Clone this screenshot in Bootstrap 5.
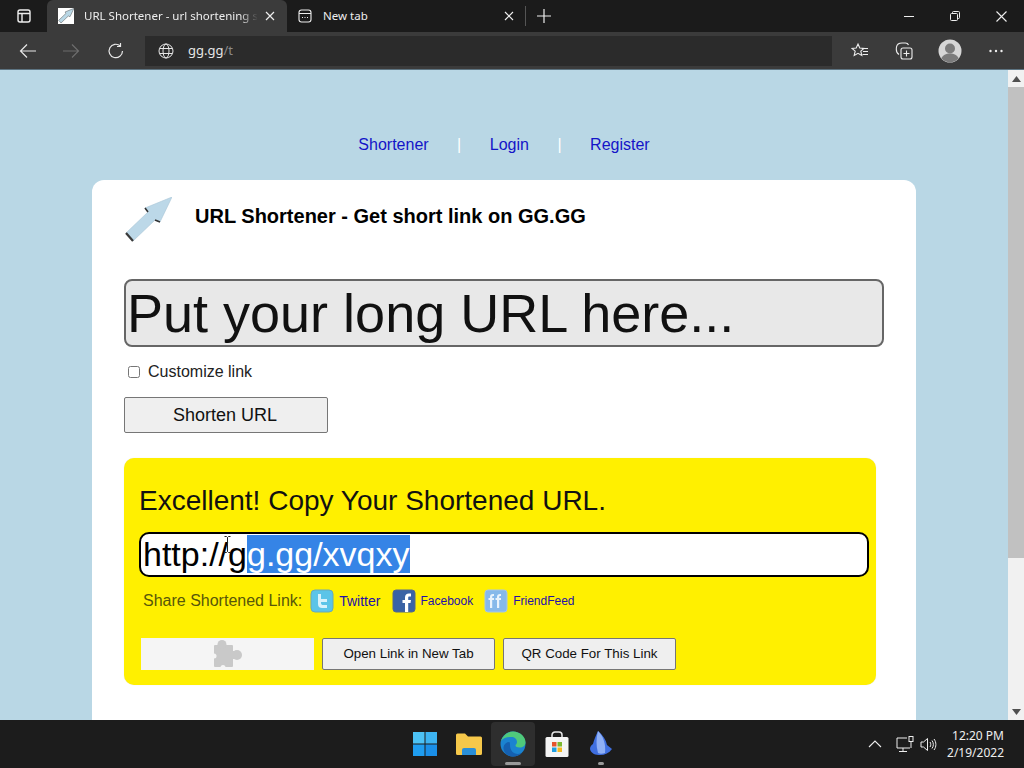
<!DOCTYPE html>
<html lang="en">
<head>
<meta charset="utf-8">
<title>URL Shortener</title>
<link href="https://cdn.jsdelivr.net/npm/bootstrap@5.3.0/dist/css/bootstrap.min.css" rel="stylesheet">
<style>
html,body{height:100%;overflow:hidden}
body{font-family:"Liberation Sans",Arial,sans-serif;background:#1c1c1c}
.shell{height:768px;width:1024px}
.ui{font-family:"Noto Sans","Open Sans",sans-serif}
.tabbar{height:32px;background:#1b1b1b;color:#eee;font-size:11.5px}
.winbtn{width:46px;height:32px}
.sidebtn{width:47px;height:32px}
.tab-on{width:240px;height:32px;background:#3b3b3b;padding:0 12px 0 11px;border-radius:6px 6px 0 0}
.tab-off{width:238px;height:32px;padding:0 11px 0 11px}
.favi{width:16px;height:16px;background:#fff;flex:none;margin-right:10px}
.tabtitle{flex:1;white-space:nowrap;overflow:hidden;-webkit-mask-image:linear-gradient(90deg,#000 86%,transparent 96%);mask-image:linear-gradient(90deg,#000 86%,transparent 96%)}
.newtab-label{flex:1;margin-left:11px}
.tabdiv{width:1px;height:20px;background:#555}
.plus{margin-left:8px}
.toolbar{height:38px;background:#3b3b3b;border-bottom:1px solid #5d7482}
.tool{width:44px;height:30px}
.tool-back{width:46px;margin-left:5px}
.tool-fwd{width:40px}
.tool-reload{width:50px}
.tool-avatar{width:48px}
.omni{width:687px;height:30px;background:#2b2b2b;color:#e6e6e6;font-size:13px;padding-left:13px;margin:0 6px 0 4px;gap:14px}
.omni .dim{color:#8a8a8a}
.viewport{height:650px}
.pagearea{width:1008px;height:650px;background:#b9d7e5;padding-top:61px}
.topnav{height:28px;margin-bottom:21px;font-size:16px;color:#fff}
.topnav a{color:#1414c8;text-decoration:none}
.topnav .sep{margin:0 28.5px}
.sheet{width:824px;margin:0 auto;height:600px;background:#fff;border-radius:12px;padding:17px 32px 0}
.logo-row{height:82px}
.sheet-title{font-size:20px;line-height:24px;font-weight:700;color:#000;margin:7px 0 0 23px}
.longurl.form-control{height:68px;border:2px solid #666;border-radius:8px;background:#e8e8e8;font-size:54px;padding:0 1px;color:#111;line-height:1}
.longurl.form-control::placeholder{color:#111;opacity:1}
.custom-row{height:50px;padding-left:4px;font-size:16px;color:#222}
.custom-row input{width:12px;height:12px;margin:0 8px 0 0}
.go.btn{width:204px;height:36px;background:#efefef;border:1px solid #767676;border-radius:2px;font-size:18px;color:#111;padding:0 2px 0 0;display:block}
.resultbox{width:752px;height:227px;margin-top:25px;background:#fff000;border-radius:10px;padding:0 7px 0 15px;box-shadow:0 0 1px #ddd}
.res-head{font-size:28px;color:#111;line-height:30px;padding-top:28px;margin:0}
.shorturl{height:45px;width:730px;margin-top:16px;background:#fff;border:2px solid #000;border-radius:10px;font-size:34px;line-height:41px;padding-left:2px;color:#000;position:relative}
.shorturl .sel{background:#3584e6;color:#fff}
.ibeam{position:absolute;left:83px;top:2px}
.share{height:32px;margin-top:8px;padding-left:4px;font-size:16px;color:#57570a}
.share a{color:#2410a8;text-decoration:none;font-size:12px}
.share a.big{font-size:14px}
.share svg{display:block;flex:none}
.gap-l8{margin-left:8px}
.gap-l12{margin-left:12px}
.gap-l11{margin-left:11px}
.gap-l5{margin-left:5px}
.gap-l4{margin-left:4px}
.actions{margin:21px 0 0 2px;gap:8px}
.puzzle{width:173px;height:32px;background:#f5f5f5}
.act.btn{width:173px;height:32px;background:#efefef;border:1px solid #767676;border-radius:2px;font-size:13.33px;color:#111;padding:0}
.scroll{width:16px;height:650px;background:#f1f1f1}
.sarrow{height:17px}
.thumb{height:471px;background:#c1c1c1}
.taskbar{height:48px;background:#1c1c1c;color:#eee;font-size:12px;line-height:17px}
.task-left{width:403px;flex:none}
.taskitem{width:44px;height:44px}
.taskitem.on{background:#2e2e2e;border-radius:4px;position:relative}
.taskitem.on::after,.taskitem.run::after{content:"";position:absolute;bottom:1px;left:50%;transform:translateX(-50%);height:3px;border-radius:2px;background:#9a9a9a;width:16px}
.taskitem.run{position:relative}
.taskitem.run::after{width:6px}
.tray-monitor{margin-left:14px}
.tray-speaker{margin-left:6px}
.clock{padding-right:20px;text-align:right;margin-left:10px}
</style>
</head>
<body>
<div class="shell d-flex flex-column">
  <div class="tabbar ui d-flex align-items-center">
    <div class="sidebtn d-flex align-items-center justify-content-center">
      <svg width="16" height="16" viewBox="0 0 16 16" fill="none" stroke="#eee" stroke-width="1.4"><rect x="2" y="2" width="12" height="12" rx="2"/><path d="M2 5.500h12M6 5.500V14"/></svg>
    </div>
    <div class="tab-on d-flex align-items-center">
      <span class="favi d-flex"><svg width="16" height="16" viewBox="0 0 48 46"><path d="M48 0 36 25 31 23 9 44 2 36 24 15 21 11Z" fill="#b9d7e5" stroke="#555" stroke-width="1.500"/></svg></span>
      <span class="tabtitle">URL Shortener - url shortening s</span>
      <svg width="10" height="10" viewBox="0 0 10 10" stroke="#eee" stroke-width="1.200"><path d="M1 1l8 8M9 1l-8 8"/></svg>
    </div>
    <div class="tab-off d-flex align-items-center">
      <svg width="14" height="14" viewBox="0 0 14 14" fill="none" stroke="#eee" stroke-width="1.100"><rect x="1" y="1" width="12" height="12" rx="2.500"/><path d="M1 4.500h12M4 8.500h1M6.500 8.500h1M9 8.500h1"/></svg>
      <span class="newtab-label">New tab</span>
      <svg width="10" height="10" viewBox="0 0 10 10" stroke="#eee" stroke-width="1.200"><path d="M1 1l8 8M9 1l-8 8"/></svg>
    </div>
    <div class="tabdiv"></div>
    <div class="plus d-flex"><svg width="20" height="20" viewBox="0 0 20 20" stroke="#eee" stroke-width="1.200"><path d="M10 3v14M3 10h14"/></svg></div>
    <div class="ms-auto d-flex">
      <div class="winbtn d-flex align-items-center justify-content-center"><svg width="10" height="10" viewBox="0 0 10 10" stroke="#eee"><path d="M0 5.500h10"/></svg></div>
      <div class="winbtn d-flex align-items-center justify-content-center"><svg width="10" height="10" viewBox="0 0 10 10" fill="none" stroke="#eee"><rect x=".5" y="2.500" width="7" height="7" rx="1"/><path d="M2.500 2.500V1.500a1 1 0 0 1 1-1h5a1 1 0 0 1 1 1v5a1 1 0 0 1-1 1H7.500"/></svg></div>
      <div class="winbtn d-flex align-items-center justify-content-center"><svg width="11" height="11" viewBox="0 0 11 11" stroke="#eee" stroke-width="1.100"><path d="M.5.500l10 10M10.500.500l-10 10"/></svg></div>
    </div>
  </div>

  <div class="toolbar ui d-flex align-items-center">
    <div class="tool tool-back d-flex align-items-center justify-content-center"><svg width="18" height="16" viewBox="0 0 18 16" fill="none" stroke="#e8e8e8" stroke-width="1.200"><path d="M17 8H1.500M8 1.500 1.500 8 8 14.500"/></svg></div>
    <div class="tool tool-fwd d-flex align-items-center justify-content-center"><svg width="18" height="16" viewBox="0 0 18 16" fill="none" stroke="#6d6d6d" stroke-width="1.200"><path d="M1 8h15.500M10 1.500 16.500 8 10 14.500"/></svg></div>
    <div class="tool tool-reload d-flex align-items-center justify-content-center"><svg width="18" height="18" viewBox="0 0 18 18" fill="none" stroke="#e8e8e8" stroke-width="1.200"><path d="M15.500 9a6.700 6.700 0 1 1-2.200-5M13.500 1v3.500H10"/></svg></div>
    <div class="omni d-flex align-items-center">
      <svg width="16" height="16" viewBox="0 0 16 16" fill="none" stroke="#e6e6e6" stroke-width="1"><circle cx="8" cy="8" r="7"/><ellipse cx="8" cy="8" rx="3" ry="7"/><path d="M1.500 5.500h13M1.500 10.500h13"/></svg>
      <span>gg.gg<span class="dim">/t</span></span>
    </div>
    <div class="tool d-flex align-items-center justify-content-center"><svg width="18" height="18" viewBox="0 0 18 18" fill="none" stroke="#eee" stroke-width="1.100"><path d="M7 2l1.800 4 4.200.4-3.200 2.800 1 4.300L7 11.300 3.200 13.500l1-4.300L1 6.400 5.200 6z"/><path d="M11 6.500h6M12 9.500h5M11.500 12.500h5.500"/></svg></div>
    <div class="tool d-flex align-items-center justify-content-center"><svg width="18" height="18" viewBox="0 0 18 18" fill="none" stroke="#eee" stroke-width="1.100"><path d="M4 12.500C1.500 11 1 8 1.500 5 2 2 4 1 7 1h3.500c1.500 0 2.500.7 3 2"/><rect x="6" y="6" width="11" height="11" rx="2"/><path d="M11.500 8.500v6M8.500 11.500h6"/></svg></div>
    <div class="tool tool-avatar d-flex align-items-center justify-content-center"><svg width="24" height="24" viewBox="0 0 24 24"><circle cx="12" cy="12" r="11.500" fill="#d6d6d6"/><circle cx="12" cy="9.500" r="5" fill="#7b7b7b"/><path d="M3.500 19.500c1-3.500 4.500-5 8.500-5s7.500 1.500 8.500 5a11.500 11.500 0 0 1-17 0z" fill="#7b7b7b"/></svg></div>
    <div class="tool d-flex align-items-center justify-content-center"><svg width="14" height="4" viewBox="0 0 14 4" fill="#eee"><circle cx="1.500" cy="2" r="1.200"/><circle cx="7" cy="2" r="1.200"/><circle cx="12.500" cy="2" r="1.200"/></svg></div>
  </div>

  <div class="viewport d-flex">
    <div class="pagearea">
      <div class="topnav d-flex align-items-center justify-content-center">
        <a href="#">Shortener</a><span class="sep">|</span><a href="#">Login</a><span class="sep">|</span><a href="#">Register</a>
      </div>
      <div class="sheet">
        <div class="logo-row d-flex align-items-start">
          <svg width="48" height="46" viewBox="0 0 48 46" class="flex-shrink-0"><path d="M48 0 36 25 31 23 9 44 2 36 24 15 21 11Z" fill="#bcd8e8" stroke="#a9c6d6" stroke-width=".6"/><path d="M2 36l7 8" stroke="#3a3a3a" stroke-width="2.200"/><path d="M21 11l3 4M31 23l5 2" stroke="#333" stroke-width="1.600"/></svg>
          <h1 class="sheet-title">URL Shortener - Get short link on GG.GG</h1>
        </div>
        <input class="longurl form-control shadow-none" type="text" placeholder="Put your long URL here..." aria-label="Long URL">
        <label class="custom-row d-flex align-items-center"><input type="checkbox">Customize link</label>
        <button class="go btn" type="button">Shorten URL</button>
        <div class="resultbox">
          <p class="res-head">Excellent! Copy Your Shortened URL.</p>
          <div class="shorturl">http://g<span class="sel">g.gg/xvqxy</span>
            <svg class="ibeam" width="7" height="17" viewBox="0 0 7 17" fill="none" stroke="#222" stroke-width="1"><path d="M.5.500h2l1 1 1-1h2M3.500 1.500v14M.5 16.500h2l1-1 1 1h2"/></svg>
          </div>
          <div class="share d-flex align-items-center">
            <span>Share Shortened Link:</span>
            <svg class="gap-l8" width="24" height="24" viewBox="0 0 24 24"><rect x="1" y="1" width="22" height="22" rx="4" fill="#5bc4e8" stroke="#6aa9b8"/><path d="M8 5v10c0 3 2 4 4 4h5v-3h-4c-1 0-2-.5-2-2v-1h6v-3h-6V5z" fill="#d8f2fb"/></svg>
            <a class="big gap-l5" href="#">Twitter</a>
            <svg class="gap-l12" width="24" height="24" viewBox="0 0 24 24"><rect x="1" y="1" width="22" height="22" rx="3" fill="#3a63a5" stroke="#55698a"/><path d="M13 23v-9h-2.500v-3H13V8.500C13 6 14.500 4.500 17 4.500h2v3h-1.500c-1 0-1.300.5-1.300 1.300V11H19l-.5 3h-2.300v9z" fill="#fff"/></svg>
            <a class="gap-l4" href="#">Facebook</a>
            <svg class="gap-l11" width="24" height="24" viewBox="0 0 24 24"><rect x="1" y="1" width="22" height="22" rx="3" fill="#86b9ea" stroke="#a6c6e6"/><path d="M6 19v-8H4.500V9H6V8c0-2 1-3 3-3h1v2H9.300C8.500 7 8.200 7.400 8.200 8v1H10v2H8.200v8zM13 19v-8h-1.500V9H13V8c0-2 1-3 3-3h1v2h-.7c-.8 0-1.100.4-1.100 1v1H17v2h-1.800v8z" fill="#e9f3fc"/></svg>
            <a class="gap-l5" href="#">FriendFeed</a>
          </div>
          <div class="actions d-flex">
            <div class="puzzle d-flex align-items-center justify-content-center">
              <svg width="30" height="28" viewBox="0 0 30 28"><rect x="1" y="5" width="19" height="22" rx="1" fill="#c9c9c9"/><circle cx="9" cy="4.500" r="4.500" fill="#c9c9c9"/><circle cx="24" cy="15" r="5" fill="#c9c9c9"/><rect x="19" y="11" width="5" height="8" fill="#c9c9c9"/><circle cx="1" cy="16" r="2.500" fill="#f5f5f5"/><circle cx="10" cy="27.500" r="2.500" fill="#f5f5f5"/></svg>
            </div>
            <button class="act btn" type="button">Open Link in New Tab</button>
            <button class="act btn" type="button">QR Code For This Link</button>
          </div>
        </div>
      </div>
    </div>
    <div class="scroll d-flex flex-column">
      <div class="sarrow d-flex align-items-center justify-content-center"><svg width="9" height="6" viewBox="0 0 9 6" fill="#505050"><path d="M4.500 0 9 6H0z"/></svg></div>
      <div class="thumb"></div>
      <div class="sarrow d-flex align-items-center justify-content-center mt-auto"><svg width="9" height="6" viewBox="0 0 9 6" fill="#505050"><path d="M4.500 6 0 0h9z"/></svg></div>
    </div>
  </div>

  <div class="taskbar ui d-flex align-items-center">
    <div class="task-left"></div>
    <div class="d-flex align-items-center">
      <div class="taskitem d-flex align-items-center justify-content-center"><svg width="24" height="24" viewBox="0 0 24 24"><rect x="0" y="0" width="11.500" height="11.500" fill="#4cc2f5"/><rect x="12.500" y="0" width="11.500" height="11.500" fill="#3db4f2"/><rect x="0" y="12.500" width="11.500" height="11.500" fill="#1f9df0"/><rect x="12.500" y="12.500" width="11.500" height="11.500" fill="#1a8fe8"/></svg></div>
      <div class="taskitem d-flex align-items-center justify-content-center"><svg width="26" height="22" viewBox="0 0 26 22"><path d="M0 2a1.500 1.500 0 0 1 1.500-1.500H9l3 3h12.500A1.500 1.500 0 0 1 26 5v15.500a1.500 1.500 0 0 1-1.500 1.500h-23A1.500 1.500 0 0 1 0 20.500z" fill="#f6c84a"/><path d="M6 22v-5a2 2 0 0 1 2-2h10a2 2 0 0 1 2 2v5z" fill="#2a8fd8"/></svg></div>
      <div class="taskitem on d-flex align-items-center justify-content-center"><svg width="26" height="26" viewBox="0 0 26 26"><circle cx="13" cy="13" r="12.500" fill="#1b83d0"/><path d="M1 10C3 4 8 .5 13 .5c7 0 12.500 5 12.500 11 0 3-2.500 5-6 5-2.500 0-4-1-4-2 0-1 1.500-1.500 1.500-3.500 0-3-2.500-5-5.500-5C7 6 3 7 1 10z" fill="#4fc97b"/><path d="M10 14c0 5 3 9 8 9 1.500 0 3-.5 4-1.200C20 24.500 16.500 25.500 13 25.500 7 25.500 3 21 3.500 16c.5-3 3-5 6-5 .5 1 .5 2 .5 3z" fill="#1560b0"/></svg></div>
      <div class="taskitem d-flex align-items-center justify-content-center"><svg width="24" height="26" viewBox="0 0 24 26"><path d="M7 7V4a3 3 0 0 1 3-3h4a3 3 0 0 1 3 3v3" fill="none" stroke="#e8e8e8" stroke-width="1.500"/><rect x="0.500" y="6" width="23" height="20" rx="1.500" fill="#f4f4f4"/><rect x="7" y="11" width="4.500" height="4.500" fill="#e5532d"/><rect x="12.500" y="11" width="4.500" height="4.500" fill="#7cb82f"/><rect x="7" y="16.500" width="4.500" height="4.500" fill="#1f9de0"/><rect x="12.500" y="16.500" width="4.500" height="4.500" fill="#f5b81f"/></svg></div>
      <div class="taskitem run d-flex align-items-center justify-content-center"><svg width="24" height="26" viewBox="0 0 24 26"><path d="M9 0c5 4 8 9 9 14l5 4c-3 4-7 6-12 6-4 0-9-1-10-6 0-2 1-4 3-5C5 9 7 4 9 0z" fill="#3f6fe0"/><path d="M9 0c5 5 8 12 7 22-3 1-5 1-7 0C7 15 7 7 9 0z" fill="#8fb0f5"/></svg></div>
    </div>
    <div class="ms-auto d-flex align-items-center">
      <svg width="14" height="8" viewBox="0 0 14 8" fill="none" stroke="#eee" stroke-width="1.100"><path d="M1 7l6-6 6 6"/></svg>
      <svg class="tray-monitor" width="18" height="16" viewBox="0 0 18 16" fill="none" stroke="#eee" stroke-width="1"><path d="M11 2H1v10h13M7 12v3M3 15.500h8"/><rect x="13" y="0.500" width="4" height="5"/><path d="M15 5.500V12"/></svg>
      <svg class="tray-speaker" width="17" height="15" viewBox="0 0 17 15" fill="none" stroke="#eee" stroke-width="1"><path d="M1 5h2.500L7.500 1.500v12L3.500 10H1zM10 5c1 1.500 1 3.500 0 5M12 3.500c1.800 2.300 1.800 5.700 0 8M14 2c2.500 3.200 2.500 7.800 0 11"/></svg>
      <div class="clock"><div>12:20 PM</div><div>2/19/2022</div></div>
    </div>
  </div>
</div>
<script src="https://cdn.jsdelivr.net/npm/bootstrap@5.3.0/dist/js/bootstrap.bundle.min.js"></script>
</body>
</html>
